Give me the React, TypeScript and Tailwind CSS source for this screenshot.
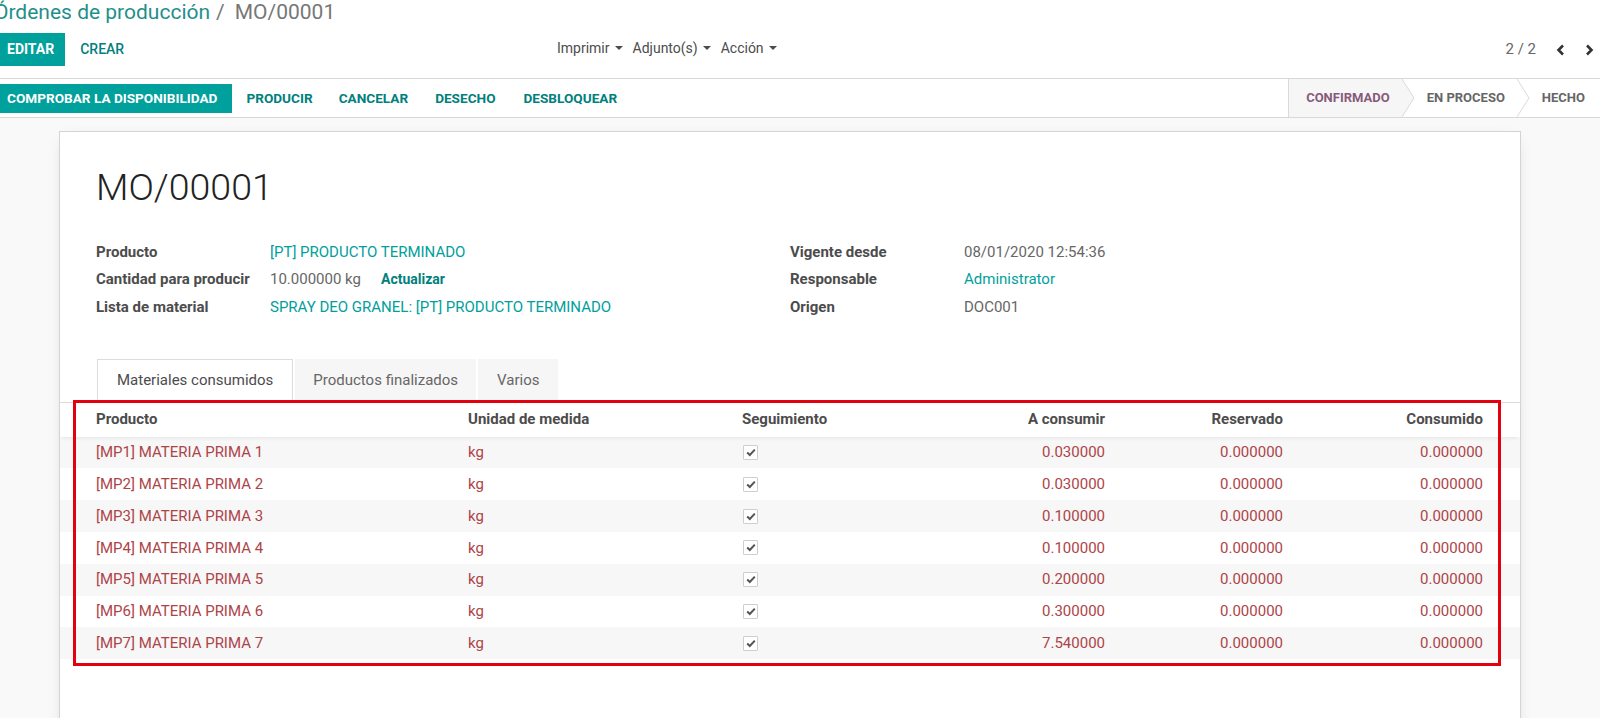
import React from 'react';

const rows: [string, string][] = [
  ['[MP1] MATERIA PRIMA 1', '0.030000'],
  ['[MP2] MATERIA PRIMA 2', '0.030000'],
  ['[MP3] MATERIA PRIMA 3', '0.100000'],
  ['[MP4] MATERIA PRIMA 4', '0.100000'],
  ['[MP5] MATERIA PRIMA 5', '0.200000'],
  ['[MP6] MATERIA PRIMA 6', '0.300000'],
  ['[MP7] MATERIA PRIMA 7', '7.540000'],
];

function Caret() {
  return (
    <span className="inline-block w-0 h-0 border-x-[4px] border-x-transparent border-t-[4px] border-t-[#4c4c4c] ml-[5px]" />
  );
}

function Chevron({ active }: { active?: boolean }) {
  return (
    <svg width="13" height="38" viewBox="0 0 13 38" className="shrink-0 block">
      {active && <polygon points="0,0 12,19 0,38" fill="#f6f6f6" />}
      <polyline points="0,0 12,19 0,38" fill="none" stroke="#dadada" strokeWidth="1" />
    </svg>
  );
}

function Check() {
  return (
    <span className="flex items-center justify-center w-[15px] h-[15px] border border-[#cfcfcf] bg-white rounded-[1px]">
      <svg width="10" height="9" viewBox="0 0 10 9">
        <polyline points="1.2,4.6 3.8,7 8.8,1.6" fill="none" stroke="#555" strokeWidth="2" />
      </svg>
    </span>
  );
}

function Field({ label, children }: { label: string; children: React.ReactNode }) {
  return (
    <div className="flex items-center h-[27.5px]">
      <div className="w-[174px] shrink-0 font-bold text-[#4c4c4c]">{label}</div>
      <div className="flex items-center">{children}</div>
    </div>
  );
}

export default function App() {
  return (
    <div className="w-[1600px] h-[718px] overflow-hidden bg-[#f9f9f9] [font-family:Roboto,'Noto_Sans',sans-serif] text-[15px] text-[#4c4c4c]">
      {/* control panel */}
      <div className="bg-white border-b border-[#d8d8d8] h-[79px]">
        <div className="h-[30px] ml-[-6px] text-[21px] leading-[25px] whitespace-nowrap">
          <span className="text-[#1f8f8a]">Órdenes de producción</span>
          <span className="text-[#777] ml-[6px] mr-[10px]">/</span>
          <span className="text-[#777]">MO/00001</span>
        </div>
        <div className="mt-[3px] h-[33px] flex items-stretch">
          <div className="w-[557px] shrink-0 flex items-stretch">
            <div className="ml-[-4px] bg-[#00a09d] text-white font-bold text-[14px] px-[11px] flex items-center">EDITAR</div>
            <div className="ml-[8px] px-[7px] text-[#01807d] text-[14px] font-medium flex items-center">CREAR</div>
          </div>
          <div className="flex items-center text-[14px] text-[#4c4c4c] mt-[-3px]">
            <span className="flex items-center">Imprimir<Caret /></span>
            <span className="flex items-center ml-[10px]">Adjunto(s)<Caret /></span>
            <span className="flex items-center ml-[10px]">Acción<Caret /></span>
          </div>
          <div className="ml-auto flex items-center pr-[6px] text-[15px] text-[#666]">
            <span>2 / 2</span>
            <svg width="10" height="12" viewBox="0 0 10 12" className="ml-[20px]">
              <polyline points="7,1.5 2.5,6 7,10.5" fill="none" stroke="#333" strokeWidth="2.6" />
            </svg>
            <svg width="10" height="12" viewBox="0 0 10 12" className="ml-[18px]">
              <polyline points="3,1.5 7.5,6 3,10.5" fill="none" stroke="#333" strokeWidth="2.6" />
            </svg>
          </div>
        </div>
      </div>

      {/* status bar */}
      <div className="bg-white border-b border-[#d8d8d8] h-[39px] flex items-stretch">
        <div className="flex items-center text-[13.6px] font-bold">
          <div className="ml-[-4px] bg-[#00a09d] text-white h-[29px] pl-[11px] pr-[15px] flex items-center">COMPROBAR LA DISPONIBILIDAD</div>
          <div className="ml-[1px] px-[13px] text-[#01807d]">PRODUCIR</div>
          <div className="px-[13px] text-[#01807d]">CANCELAR</div>
          <div className="px-[14px] text-[#01807d]">DESECHO</div>
          <div className="px-[14px] text-[#01807d]">DESBLOQUEAR</div>
        </div>
        <div className="ml-auto flex items-stretch text-[13px] font-bold">
          <div className="border-l border-[#dadada] bg-[#f6f6f6] pl-[17px] pr-[12px] flex items-center text-[#875a7b]">CONFIRMADO</div>
          <Chevron active />
          <div className="px-[12px] flex items-center text-[#666]">EN PROCESO</div>
          <Chevron />
          <div className="pl-[12px] pr-[15px] flex items-center text-[#666]">HECHO</div>
        </div>
      </div>

      {/* sheet */}
      <div className="mt-[13px] ml-[59px] w-[1462px] min-h-[700px] bg-white border border-[#d4d4d4] shadow-[0_4px_16px_-8px_rgba(0,0,0,0.25)]">
        <div className="pt-[32px] px-[36px]">
          <div className="text-[37.5px] leading-[46px] font-light text-[#222]">MO/00001</div>
          <div className="mt-[28px] flex">
            <div className="w-[694px] shrink-0">
              <Field label="Producto"><span className="text-[#00a09d]">[PT] PRODUCTO TERMINADO</span></Field>
              <Field label="Cantidad para producir">
                <span className="text-[#666]">10.000000 kg</span>
                <span className="ml-[20px] text-[14px] font-bold text-[#01807d]">Actualizar</span>
              </Field>
              <Field label="Lista de material"><span className="text-[#00a09d]">SPRAY DEO GRANEL: [PT] PRODUCTO TERMINADO</span></Field>
            </div>
            <div>
              <Field label="Vigente desde"><span className="text-[#666]">08/01/2020 12:54:36</span></Field>
              <Field label="Responsable"><span className="text-[#00a09d]">Administrator</span></Field>
              <Field label="Origen"><span className="text-[#666]">DOC001</span></Field>
            </div>
          </div>
        </div>

        {/* tabs */}
        <div className="mt-[38px] px-[37px] border-b border-[#dcdcdc] flex items-end gap-[2px] h-[44px]">
          <div className="h-[44px] mb-[-1px] px-[19px] flex items-center bg-white border border-[#dcdcdc] border-b-white text-[#4c4c4c]">Materiales consumidos</div>
          <div className="h-[43px] px-[18px] flex items-center bg-[#f6f6f6] text-[#666]">Productos finalizados</div>
          <div className="h-[43px] px-[19px] flex items-center bg-[#f6f6f6] text-[#666]">Varios</div>
        </div>

        {/* table */}
        <div className="relative pb-[7px]">
          <div className="relative z-10 h-[34px] px-[36px] grid grid-cols-[372px_274px_163px_200px_178px_200px] items-center font-bold text-[#4c4c4c] bg-white shadow-[0_3px_4px_-2px_rgba(0,0,0,0.08)]">
            <div>Producto</div>
            <div>Unidad de medida</div>
            <div>Seguimiento</div>
            <div className="text-right">A consumir</div>
            <div className="text-right">Reservado</div>
            <div className="text-right">Consumido</div>
          </div>
          {rows.map(([name, qty], i) => (
            <div
              key={name}
              className={`h-[31.83px] px-[36px] grid grid-cols-[372px_274px_163px_200px_178px_200px] items-center text-[#ad4448] ${i % 2 === 0 ? 'bg-[#f7f7f7]' : 'bg-white'}`}
            >
              <div>{name}</div>
              <div>kg</div>
              <div className="pl-[1px]"><Check /></div>
              <div className="text-right">{qty}</div>
              <div className="text-right">0.000000</div>
              <div className="text-right">0.000000</div>
            </div>
          ))}
          <div className="absolute left-[13px] right-[19px] top-[-3px] bottom-0 border-[3px] border-[#e3000f] z-20 pointer-events-none" />
        </div>
      </div>
    </div>
  );
}
